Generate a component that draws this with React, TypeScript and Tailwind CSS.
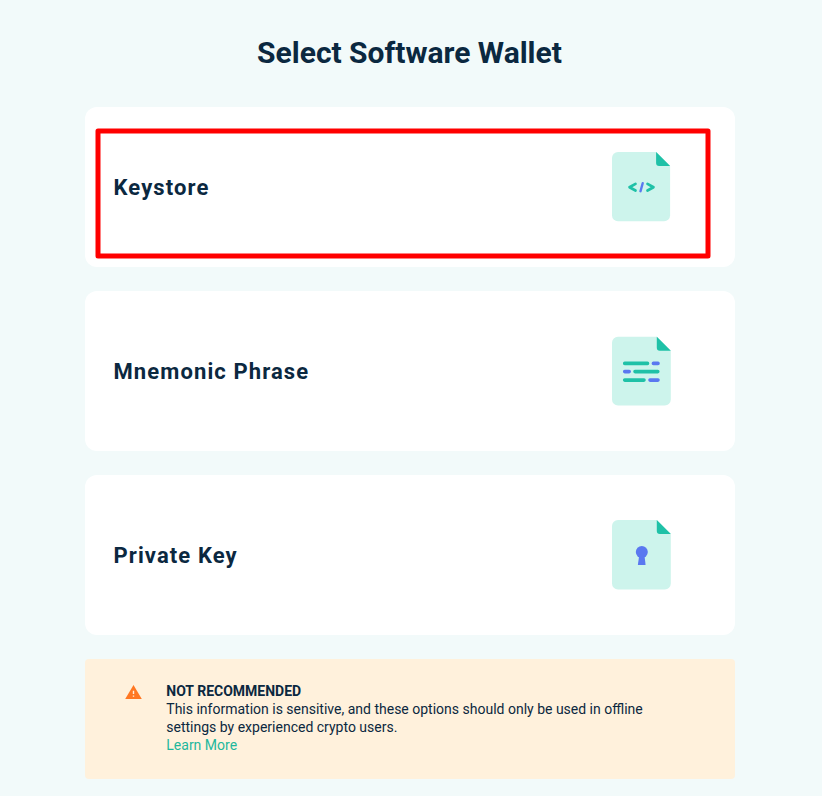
import type { ReactNode } from "react";

function DocumentIcon({
  foldX = 45,
  top = 0,
  height = 69.5,
  children,
}: {
  foldX?: number;
  top?: number;
  height?: number;
  children: ReactNode;
}) {
  const right = foldX + 13.8;
  const bottom = top + height;
  return (
    <svg width="60" height="70" viewBox="0 0 60 70" fill="none" className="shrink-0" aria-hidden="true">
      <path
        d={`M6 ${top}H${foldX}L${right} ${top + 13.8}V${bottom - 6}a6 6 0 0 1-6 6H6a6 6 0 0 1-6-6V${top + 6}a6 6 0 0 1 6-6Z`}
        fill="#cdf4ec"
      />
      <path d={`M${foldX - 0.2} ${top}L${right} ${top + 14}H${foldX + 2.8}a3 3 0 0 1-3-3Z`} fill="#1fc1a7" />
      {children}
    </svg>
  );
}

function KeystoreIcon() {
  return (
    <DocumentIcon foldX={44.3} height={69.2}>
      <g strokeWidth="2.7" strokeLinecap="round" strokeLinejoin="round">
        <path d="M23.5 31.9L17.5 35.2L23.5 38.5M35.5 31.9L41.5 35.2L35.5 38.5" stroke="#1fc1a7" />
        <path d="M30.7 31.2L28.5 39.2" stroke="#5a78f0" strokeWidth="2.4" />
      </g>
    </DocumentIcon>
  );
}

function MnemonicIcon() {
  return (
    <DocumentIcon top={0.7} height={68.7}>
      <g strokeWidth="3.6" strokeLinecap="round">
        <path d="M12.7 27.4H35.5M23 35.6H45.8M12.7 44.1H32" stroke="#1fc1a7" />
        <path d="M41.4 27.4H46M12.7 35.6H17.2M38 44.1H46" stroke="#5a78f0" />
      </g>
    </DocumentIcon>
  );
}

function PrivateKeyIcon() {
  return (
    <DocumentIcon>
      <circle cx="29.8" cy="32" r="6" fill="#5a78f0" />
      <path d="M27.2 35H32.4L33.6 45H25.9Z" fill="#5a78f0" />
    </DocumentIcon>
  );
}

function HighlightFrame() {
  return (
    <svg
      width="650"
      height="160"
      viewBox="0 0 650 160"
      fill="none"
      className="pointer-events-none absolute inset-0"
      aria-hidden="true"
    >
      <rect x="13" y="24" width="610" height="125" stroke="#ff0000" strokeWidth="5" strokeLinejoin="round" />
    </svg>
  );
}

function WalletOption({ title, icon, highlighted = false }: { title: string; icon: ReactNode; highlighted?: boolean }) {
  return (
    <button className="relative flex h-40 w-full items-center justify-between rounded-xl bg-white pr-[63px] pl-[28.5px] text-left">
      <span className="pt-0.5 text-[22px] leading-7 font-bold tracking-[1.1px]">{title}</span>
      {icon}
      {highlighted && <HighlightFrame />}
    </button>
  );
}

export default function App() {
  return (
    <main className="h-[796px] bg-[#f2fafa] pt-[33px] pr-[87px] pl-[85px] font-['Roboto',sans-serif] text-[#0b2840]">
      <h1 className="pr-px text-center text-[30px] leading-10 font-bold">Select Software Wallet</h1>
      <div className="mt-[34px] flex flex-col gap-6">
        <WalletOption title="Keystore" icon={<KeystoreIcon />} highlighted />
        <WalletOption title="Mnemonic Phrase" icon={<MnemonicIcon />} />
        <WalletOption title="Private Key" icon={<PrivateKeyIcon />} />
        <section className="flex h-[120px] items-start rounded-[4px] bg-[#fff1dc] pt-[23px] pl-10">
          <svg width="17" height="14" viewBox="0 0 17 14" className="mt-[3px] shrink-0" aria-hidden="true">
            <path d="M8.5 0L16.8 14H.2Z" fill="#ff7722" />
            <path d="M7.8 5.7h1.4v3.2H7.8zM7.8 10.4h1.4v1.4H7.8z" fill="#fff1dc" />
          </svg>
          <div className="ml-[24.3px] text-sm leading-[18px]">
            <p className="font-bold">NOT RECOMMENDED</p>
            <p>
              This information is sensitive, and these options should only be used in offline
              <br />
              settings by experienced crypto users.
            </p>
            <a className="text-[#1eb89c]">Learn More</a>
          </div>
        </section>
      </div>
    </main>
  );
}
